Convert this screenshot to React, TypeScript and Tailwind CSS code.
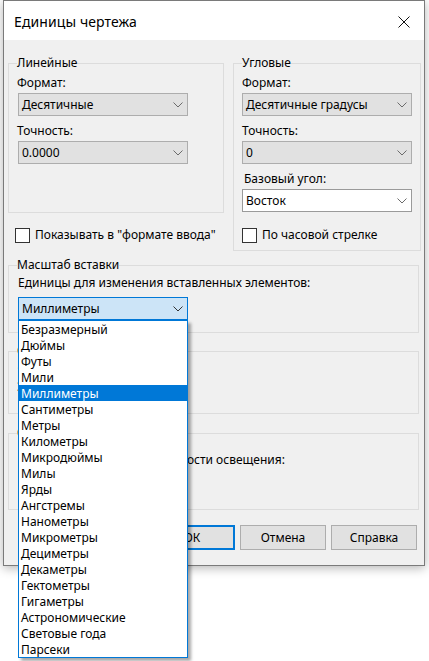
import React from 'react';

const units = [
  'Безразмерный',
  'Дюймы',
  'Футы',
  'Мили',
  'Миллиметры',
  'Сантиметры',
  'Метры',
  'Километры',
  'Микродюймы',
  'Милы',
  'Ярды',
  'Ангстремы',
  'Нанометры',
  'Микрометры',
  'Дециметры',
  'Декаметры',
  'Гектометры',
  'Гигаметры',
  'Астрономические',
  'Световые года',
  'Парсеки',
];

const Chevron = ({ dark }: { dark?: boolean }) => (
  <svg width="10" height="6" viewBox="0 0 10 6" className="shrink-0">
    <path d="M0.5 0.5 L5 5 L9.5 0.5" fill="none" stroke={dark ? '#333333' : '#6b6b6b'} strokeWidth="1" />
  </svg>
);

type Kind = 'gray' | 'white' | 'focus';

const Combo = ({ value, kind = 'gray', width }: { value: string; kind?: Kind; width: string }) => {
  const look =
    kind === 'gray'
      ? 'bg-[#e1e1e1] border-[#adadad]'
      : kind === 'white'
        ? 'bg-white border-[#9a9a9a]'
        : 'bg-[#cce4f7] border-[#0078d7]';
  return (
    <div className={`${width} ${look} h-[23px] border flex items-center justify-between pl-[3px] pr-[4px]`}>
      <span className="text-[12px] leading-[16px] text-black mt-[1px]">{value}</span>
      <Chevron dark={kind === 'focus'} />
    </div>
  );
};

const Check = ({ label }: { label: string }) => (
  <div className="flex items-center gap-[5px] h-[16px]">
    <div className="w-[15px] h-[15px] bg-white border border-[#333333]" />
    <span className="text-[12px] leading-[16px]">{label}</span>
  </div>
);

const Label = ({ children, className = '' }: { children: React.ReactNode; className?: string }) => (
  <div className={`text-[12px] leading-[16px] ${className}`}>{children}</div>
);

const Group = ({ title, className = '', children }: { title: string; className?: string; children: React.ReactNode }) => (
  <fieldset className={`border border-[#dcdcdc] px-[8px] ${className}`}>
    <legend className="text-[12px] leading-[16px] px-0">{title}</legend>
    {children}
  </fieldset>
);

const Button = ({ children, primary }: { children: React.ReactNode; primary?: boolean }) => (
  <div
    className={`w-[86px] h-[25px] flex items-center justify-center bg-[#e1e1e1] text-[12px] ${
      primary ? 'border-2 border-[#0078d7]' : 'border border-[#adadad]'
    }`}
  >
    {children}
  </div>
);

export default function App() {
  return (
    <div className="w-[429px] h-[661px] bg-white overflow-hidden text-black font-['Noto_Sans','Open_Sans',sans-serif]">
      <div className="ml-[3px] w-[422px] border border-[#7a7a7a] bg-[#f0f0f0] shadow-[0_2px_10px_rgba(0,0,0,0.3)]">
        {/* title bar */}
        <div className="h-[39px] bg-white flex items-center justify-between pl-[10px] pr-[14px]">
          <span className="text-[14px] leading-[20px] mt-[3px] tracking-[0.1px]">Единицы чертежа</span>
          <svg width="12" height="12" viewBox="0 0 12 12" className="mt-[3px]">
            <path d="M0.5 0.5 L11.5 11.5 M11.5 0.5 L0.5 11.5" stroke="#111" strokeWidth="1" />
          </svg>
        </div>

        <div className="pl-[4px] pr-[5px] pt-[15px] pb-[15px]">
          {/* top row */}
          <div className="flex items-start gap-[9px]">
            <div className="w-[216px] shrink-0">
              <Group title="Линейные" className="pb-[48px]">
                <Label className="mt-[4px]">Формат:</Label>
                <div className="mt-[2px] ml-[1px]">
                  <Combo value="Десятичные" width="w-[170px]" />
                </div>
                <Label className="mt-[7px]">Точность:</Label>
                <div className="mt-[2px] ml-[1px]">
                  <Combo value="0.0000" width="w-[170px]" />
                </div>
              </Group>
              <div className="mt-[14px] ml-[7px]">
                <Check label={'Показывать в "формате ввода"'} />
              </div>
            </div>
            <div className="w-[187px] shrink-0">
              <Group title="Угловые" className="pb-[7px]">
                <Label className="mt-[4px]">Формат:</Label>
                <div className="mt-[2px]">
                  <Combo value="Десятичные градусы" width="w-[170px]" />
                </div>
                <Label className="mt-[7px]">Точность:</Label>
                <div className="mt-[2px]">
                  <Combo value="0" width="w-[170px]" />
                </div>
                <Label className="mt-[7px] ml-[2px]">Базовый угол:</Label>
                <div className="mt-[2px]">
                  <Combo value="Восток" kind="white" width="w-[170px]" />
                </div>
                <div className="mt-[15px]">
                  <Check label="По часовой стрелке" />
                </div>
              </Group>
            </div>
          </div>

          {/* insertion scale */}
          <Group title="Масштаб вставки" className="mt-[6px] pb-[12px] relative z-10">
            <Label className="mt-[2px] ml-[1px]">Единицы для изменения вставленных элементов:</Label>
            <div className="mt-[6px] ml-[1px] relative w-[170px]">
              <Combo value="Миллиметры" kind="focus" width="w-[170px]" />
              <div className="absolute left-0 top-[23px] w-[170px] bg-white border border-[#0078d7] shadow-[3px_3px_3px_rgba(0,0,0,0.35)]">
                {units.map((u, i) => (
                  <div
                    key={u}
                    className={`h-[16px] pl-[2px] text-[12px] leading-[17px] ${
                      i === 4 ? 'bg-[#0078d7] text-white' : 'text-black'
                    }`}
                  >
                    {u}
                  </div>
                ))}
              </div>
            </div>
          </Group>

          {/* sample output */}
          <Group title="Образец вывода" className="mt-[10px] pb-[18px]">
            <Label className="mt-[4px]">1.5000,2.0039,0.0000</Label>
            <Label>3&lt;45,0</Label>
          </Group>

          {/* lighting */}
          <Group title="Освещение" className="mt-[11px] pb-[16px]">
            <Label className="mt-[11px] ml-[1px]">Единицы задания интенсивности освещения:</Label>
            <div className="mt-[2px] ml-[1px]">
              <Combo value="Международные" width="w-[170px]" />
            </div>
          </Group>

          {/* buttons */}
          <div className="mt-[15px] mr-[2px] flex justify-end gap-[5px]">
            <Button primary>ОК</Button>
            <Button>Отмена</Button>
            <Button>Справка</Button>
          </div>
        </div>
      </div>
    </div>
  );
}
